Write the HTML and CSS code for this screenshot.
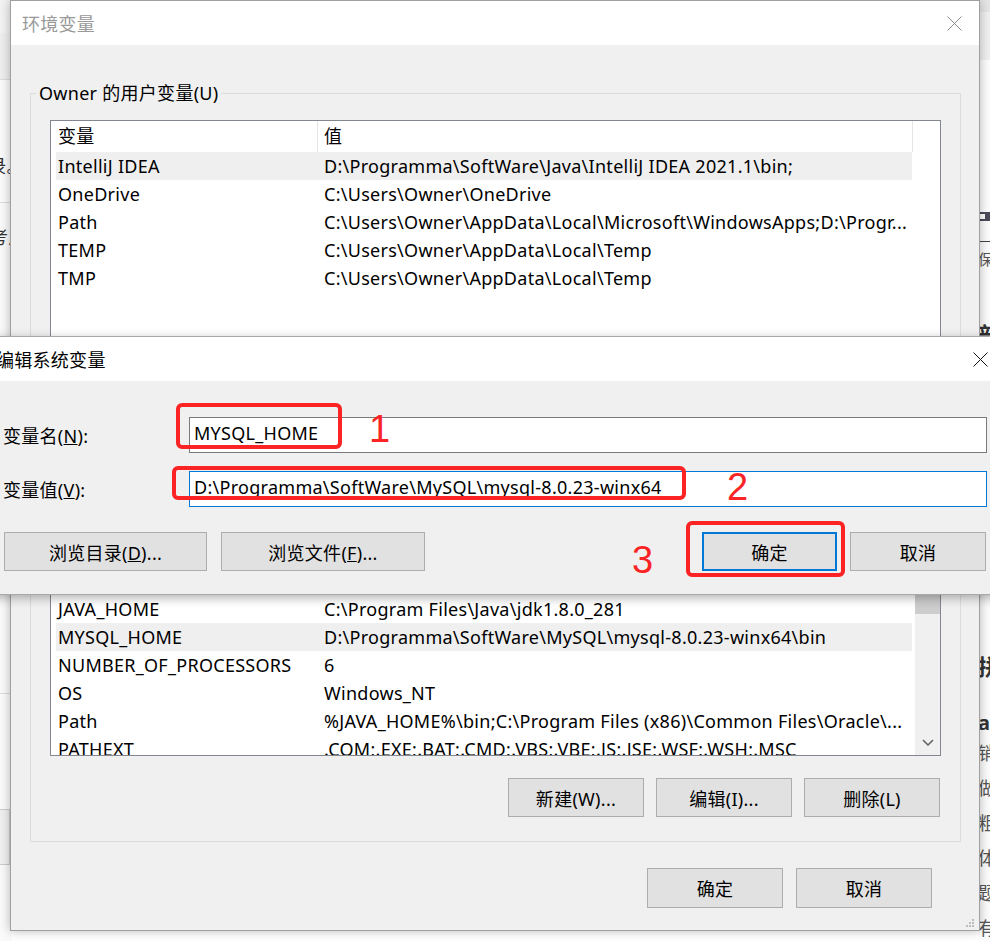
FILE: index.html
```html
<!DOCTYPE html>
<html lang="zh-CN">
<head>
  <meta charset="UTF-8">
  <title>环境变量</title>
  <link rel="stylesheet" href="styles.css">
</head>
<body>

<div class="desk">
  <div class="desk-left">
    <div class="dl-top"></div>
    <div class="dl-text dl-1">记录。</div>
    <div class="dl-line"></div>
    <div class="dl-text dl-2">考虑</div>
    <div class="dl-gap"></div>
    <div class="dl-line"></div>
    <div class="dl-btn">确定</div>
  </div>
  <div class="desk-mid"></div>
  <div class="desk-right">
    <div class="dr-top"></div>
    <div class="dr-bar"><span class="dr-box"></span></div>
    <div class="dr-text dr-save">保存</div>
    <div class="dr-bold dr-head">部分</div>
    <div class="dr-bold dr-pin">拼写</div>
    <div class="dr-bold dr-a">a</div>
    <div class="dr-text">销售</div>
    <div class="dr-text">做法</div>
    <div class="dr-text">粗体</div>
    <div class="dr-text">体验</div>
    <div class="dr-text">题目</div>
    <div class="dr-text">有序</div>
  </div>
</div>

<div class="window env">
  <div class="titlebar">
    <span>环境变量</span>
    <svg class="close" viewBox="0 0 15 15"><path d="M0.5 0.5 L14.5 14.5 M14.5 0.5 L0.5 14.5" stroke="#8a8a8a" stroke-width="1"/></svg>
  </div>
  <div class="env-body">
    <div class="group">
      <div class="legend">Owner 的用户变量(U)</div>
      <div class="list user-list">
        <div class="rows">
          <div class="list-head"><span class="name">变量</span><span class="value">值</span></div>
          <div class="row selected"><span class="name">IntelliJ IDEA</span><span class="value">D:\Programma\SoftWare\Java\IntelliJ IDEA 2021.1\bin;</span></div>
          <div class="row"><span class="name">OneDrive</span><span class="value">C:\Users\Owner\OneDrive</span></div>
          <div class="row"><span class="name">Path</span><span class="value">C:\Users\Owner\AppData\Local\Microsoft\WindowsApps;D:\Progr...</span></div>
          <div class="row"><span class="name">TEMP</span><span class="value">C:\Users\Owner\AppData\Local\Temp</span></div>
          <div class="row"><span class="name">TMP</span><span class="value">C:\Users\Owner\AppData\Local\Temp</span></div>
        </div>
      </div>
      <div class="group-buttons">
        <button class="btn">新建(N)...</button>
        <button class="btn">编辑(E)...</button>
        <button class="btn">删除(D)</button>
      </div>
    </div>

    <div class="group sys-group">
      <div class="legend">系统变量(S)</div>
      <div class="list sys-list">
        <div class="rows">
          <div class="list-head"><span class="name">变量</span><span class="value">值</span></div>
          <div class="row"><span class="name">ComSpec</span><span class="value">C:\Windows\system32\cmd.exe</span></div>
          <div class="row"><span class="name">DriverData</span><span class="value">C:\Windows\System32\Drivers\DriverData</span></div>
          <div class="row"><span class="name">JAVA_HOME</span><span class="value">C:\Program Files\Java\jdk1.8.0_281</span></div>
          <div class="row selected"><span class="name">MYSQL_HOME</span><span class="value">D:\Programma\SoftWare\MySQL\mysql-8.0.23-winx64\bin</span></div>
          <div class="row"><span class="name">NUMBER_OF_PROCESSORS</span><span class="value">6</span></div>
          <div class="row"><span class="name">OS</span><span class="value">Windows_NT</span></div>
          <div class="row"><span class="name">Path</span><span class="value">%JAVA_HOME%\bin;C:\Program Files (x86)\Common Files\Oracle\...</span></div>
          <div class="row"><span class="name">PATHEXT</span><span class="value">.COM;.EXE;.BAT;.CMD;.VBS;.VBE;.JS;.JSE;.WSF;.WSH;.MSC</span></div>
        </div>
        <div class="scrollbar">
          <div class="sb-arrow"><svg width="12" height="7" viewBox="0 0 12 7"><path d="M1 6 L6 1 L11 6" fill="none" stroke="#606060" stroke-width="1.5"/></svg></div>
          <div class="thumb"></div>
          <div class="sb-track"></div>
          <div class="sb-arrow"><svg width="12" height="7" viewBox="0 0 12 7"><path d="M1 1 L6 6 L11 1" fill="none" stroke="#606060" stroke-width="1.5"/></svg></div>
        </div>
      </div>
      <div class="group-buttons">
        <button class="btn">新建(W)...</button>
        <button class="btn">编辑(I)...</button>
        <button class="btn">删除(L)</button>
      </div>
    </div>

    <div class="dialog-buttons">
      <button class="btn">确定</button>
      <button class="btn">取消</button>
    </div>
  </div>
  <svg class="grip" width="10" height="10" viewBox="0 0 10 10">
    <rect x="7" y="1" width="2" height="2" fill="#bdbdbd"/>
    <rect x="4" y="4" width="2" height="2" fill="#bdbdbd"/>
    <rect x="7" y="4" width="2" height="2" fill="#bdbdbd"/>
    <rect x="1" y="7" width="2" height="2" fill="#bdbdbd"/>
    <rect x="4" y="7" width="2" height="2" fill="#bdbdbd"/>
    <rect x="7" y="7" width="2" height="2" fill="#bdbdbd"/>
  </svg>
</div>

<div class="window edit">
  <div class="titlebar">
    <span>编辑系统变量</span>
    <svg class="close" viewBox="0 0 15 15"><path d="M0.5 0.5 L14.5 14.5 M14.5 0.5 L0.5 14.5" stroke="#111" stroke-width="1"/></svg>
  </div>
  <div class="edit-body">
    <div class="fields">
      <label>变量名(<u>N</u>):</label>
      <div class="field">MYSQL_HOME</div>
      <label>变量值(<u>V</u>):</label>
      <div class="field focus">D:\Programma\SoftWare\MySQL\mysql-8.0.23-winx64</div>
    </div>
    <div class="edit-buttons">
      <button class="btn browse-dir">浏览目录(<u>D</u>)...</button>
      <button class="btn browse-file">浏览文件(<u>F</u>)...</button>
      <span class="spacer"></span>
      <button class="btn default">确定</button>
      <button class="btn cancel">取消</button>
    </div>
  </div>
</div>

<div class="mark mark-1"></div>
<div class="mark mark-2"></div>
<div class="mark mark-3"></div>
<span class="num num-1">1</span>
<span class="num num-2">2</span>
<span class="num num-3">3</span>

</body>
</html>
```

FILE: styles.css
```css
* {
  box-sizing: border-box;
}
body {
  margin: 0;
  width: 990px;
  height: 941px;
  overflow: hidden;
  position: relative;
  background: #fff;
  font-family: "Noto Sans", "Noto Sans CJK SC", sans-serif;
  font-size: 18px;
  letter-spacing: 0.28px;
  color: #000;
}

/* page behind the dialogs */
.desk {
  display: flex;
  height: 941px;
}
.desk-left {
  width: 12px;
  overflow: hidden;
  background: #fafafa;
}
.dl-top {
  height: 80px;
  background: #efefef;
  border-top: 33px solid #f3f3f3;
  border-bottom: 1px solid #ddd;
}
.dl-text {
  margin-left: -30px;
  white-space: nowrap;
  color: #333;
}
.dl-1 {
  margin-top: 72px;
}
.dl-line {
  height: 1px;
  margin-top: 24px;
  background: #ddd;
}
.dl-2 {
  margin-top: 20px;
  margin-left: -10px;
}
.dl-gap {
  height: 420px;
}
.dl-btn {
  margin-top: 115px;
  margin-left: -28px;
  width: 38px;
  height: 56px;
  line-height: 56px;
  background: #f0f0f0;
  border: 1px solid #ccc;
}
.desk-mid {
  flex: 1;
}
.desk-right {
  width: 12px;
  overflow: hidden;
  background: #fcfcfc;
}
.dr-top {
  height: 60px;
  background: #f0f0f0;
  border-top: 12px solid #e6e6e6;
}
.dr-bar {
  height: 9px;
  margin-top: 152px;
  background: #4b4b5a;
  padding: 2px 0 0 2px;
}
.dr-box {
  display: block;
  width: 5px;
  height: 5px;
  background: #fff;
}
.dr-save {
  margin-top: 20px;
  border-top: 1px solid #444;
  color: #2a5fb0;
  font-size: 15px;
}
.dr-head {
  margin-top: 40px;
  font-size: 22px;
}
.dr-pin {
  margin-top: 300px;
  font-size: 22px;
}
.dr-bold {
  font-weight: bold;
  color: #333;
  white-space: nowrap;
}
.dr-a {
  margin-top: 28px;
  font-size: 20px;
}
.dr-text {
  color: #555;
  line-height: 35px;
  white-space: nowrap;
}

/* windows */
.window {
  position: absolute;
  background: #f0f0f0;
}
.titlebar {
  height: 44px;
  background: #fff;
  display: flex;
  align-items: center;
  justify-content: space-between;
}
.close {
  width: 15px;
  height: 15px;
}

.env {
  left: 10px;
  top: 0;
  width: 970px;
  height: 931px;
  border: 1px solid #a0a0a0;
  box-shadow: 0 0 10px rgba(0, 0, 0, 0.28);
}
.env .titlebar {
  padding: 0 17px 0 11px;
  color: #999;
}
.env-body {
  padding-top: 48px;
}
.group {
  border: 1px solid #dcdcdc;
  margin: 0 18px 0 19px;
  padding: 0 19px 24px;
}
.sys-group {
  margin-top: 40px;
}
.legend {
  width: fit-content;
  height: 24px;
  line-height: 23px;
  margin: -12px 0 0 -14px;
  padding: 0 3px;
  background: #f0f0f0;
}
.list {
  margin-top: 14px;
  border: 1px solid #828790;
  background: #fff;
  overflow: hidden;
  display: flex;
}
.user-list {
  height: 244px;
}
.sys-list {
  height: 249px;
}
.rows {
  flex: 1;
  overflow: hidden;
}
.list-head {
  display: flex;
  height: 31px;
  line-height: 31px;
  width: 857px;
  margin-left: 5px;
}
.list-head .name,
.list-head .value {
  border-right: 1px solid #e5e5e5;
}
.row {
  display: flex;
  height: 28px;
  line-height: 28px;
  width: 856px;
  margin-left: 5px;
}
.row.selected {
  background: #efefef;
}
.name {
  flex: none;
  width: 262px;
  padding-left: 2px;
  white-space: nowrap;
  overflow: hidden;
}
.value {
  flex: 1;
  padding-left: 6px;
  white-space: nowrap;
  overflow: hidden;
}
.scrollbar {
  width: 25px;
  background: #f0f0f0;
  display: flex;
  flex-direction: column;
}
.sb-arrow {
  height: 25px;
  display: flex;
  align-items: center;
  justify-content: center;
}
.thumb {
  height: 81px;
  background: #cdcdcd;
}
.sb-track {
  flex: 1;
}

.btn {
  width: 136px;
  height: 39px;
  padding: 0;
  background: #e1e1e1;
  border: 1px solid #adadad;
  font: inherit;
  letter-spacing: inherit;
  color: #000;
  text-align: center;
  white-space: nowrap;
}
.group-buttons {
  display: flex;
  justify-content: flex-end;
  gap: 12px;
  margin-top: 12px;
  padding-right: 1px;
}
.sys-group .group-buttons {
  margin-top: 22px;
}
.dialog-buttons {
  display: flex;
  justify-content: flex-end;
  gap: 13px;
  margin-top: 26px;
  padding-right: 47px;
}
.dialog-buttons .btn {
  height: 40px;
}
.grip {
  position: absolute;
  right: 4px;
  bottom: 2px;
}

/* edit dialog on top */
.edit {
  left: -10px;
  top: 336px;
  width: 1012px;
  height: 259px;
  border: 1px solid #a8a8a8;
  box-shadow: 0 3px 10px rgba(0, 0, 0, 0.3);
}
.edit .titlebar {
  padding: 0 13px 0 5px;
}
.edit-body {
  padding: 36px 14px 23px 12px;
}
.fields {
  display: grid;
  grid-template-columns: 186px 1fr;
  row-gap: 18px;
  align-items: center;
}
.field {
  height: 36px;
  line-height: 31px;
  padding-left: 4px;
  background: #fff;
  border: 1px solid #7a7a7a;
  white-space: nowrap;
  overflow: hidden;
}
.field.focus {
  border-color: #0078d7;
}
.edit-buttons {
  display: flex;
  margin-top: 25px;
  padding: 0 1px;
}
.browse-dir {
  width: 203px;
}
.browse-file {
  width: 204px;
  margin-left: 14px;
}
.spacer {
  flex: 1;
}
.btn.default {
  width: 135px;
  margin-right: 13px;
  border: 2px solid #0078d7;
}

/* red annotations */
.mark {
  position: absolute;
  border: 4px solid #fb2323;
  border-radius: 6px;
}
.mark-1 {
  left: 176px;
  top: 403px;
  width: 166px;
  height: 46px;
}
.mark-2 {
  left: 172px;
  top: 466px;
  width: 514px;
  height: 34px;
}
.mark-3 {
  left: 686px;
  top: 521px;
  width: 159px;
  height: 56px;
}
.num {
  position: absolute;
  font-family: "Liberation Sans", sans-serif;
  font-size: 38px;
  line-height: 38px;
  letter-spacing: 0;
  color: #fb2323;
}
.num-1 {
  left: 369px;
  top: 410px;
}
.num-2 {
  left: 727px;
  top: 468px;
}
.num-3 {
  left: 632px;
  top: 541px;
}
```
